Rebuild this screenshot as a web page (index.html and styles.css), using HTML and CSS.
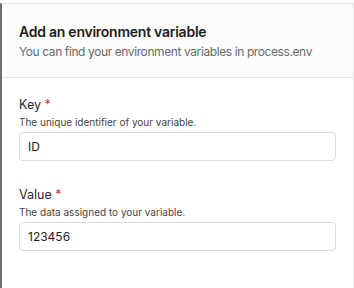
FILE: index.html
```html
<!DOCTYPE html>
<html>
<head>
<meta charset="utf-8">
<link rel="stylesheet" href="styles.css">
</head>
<body>
<div class="panel">
  <div class="header">
    <div class="title">Add an environment variable</div>
    <div class="subtitle">You can find your environment variables in process.env</div>
  </div>
  <div class="body">
    <div class="field">
      <div class="label">Key <span class="req">*</span></div>
      <div class="desc">The unique identifier of your variable.</div>
      <div class="input">ID</div>
    </div>
    <div class="field">
      <div class="label">Value <span class="req">*</span></div>
      <div class="desc">The data assigned to your variable.</div>
      <div class="input">123456</div>
    </div>
  </div>
</div>
</body>
</html>
```
FILE: styles.css
```css
html, body {
  margin: 0;
  padding: 0;
  background: #ffffff;
}
body {
  padding-top: 3px;
  font-family: Inter, "Liberation Sans", Arial, sans-serif;
  height: 288px;
  box-sizing: border-box;
}
.panel {
  border-top: 1px solid #e4e4e4;
  border-left: 2px solid #707070;
  border-right: 1px solid #e8e8e8;
  height: 285px;
  box-sizing: border-box;
}
.header {
  background: #fcfcfc;
  padding: 18px 17px 16px;
  border-bottom: 1px solid #e6e6e6;
}
.title {
  font-size: 14px;
  line-height: 20px;
  font-weight: 600;
  letter-spacing: -0.25px;
  color: #1d1d1d;
}
.subtitle {
  margin-top: 1px;
  font-size: 12px;
  line-height: 18px;
  letter-spacing: -0.4px;
  color: #6a6a6a;
}
.body {
  padding: 18px 17px 0;
  display: flex;
  flex-direction: column;
  gap: 25px;
}
.label {
  font-size: 12.5px;
  line-height: 18px;
  color: #2a2a2a;
}
.req {
  color: #c0392b;
}
.desc {
  font-size: 10px;
  line-height: 16px;
  color: #444;
}
.input {
  margin-top: 2px;
  height: 29px;
  box-sizing: border-box;
  border: 1px solid #dcdcdc;
  border-radius: 4px;
  padding: 0 8px;
  font-size: 12px;
  line-height: 27px;
  color: #222;
  background: #fff;
}
```
